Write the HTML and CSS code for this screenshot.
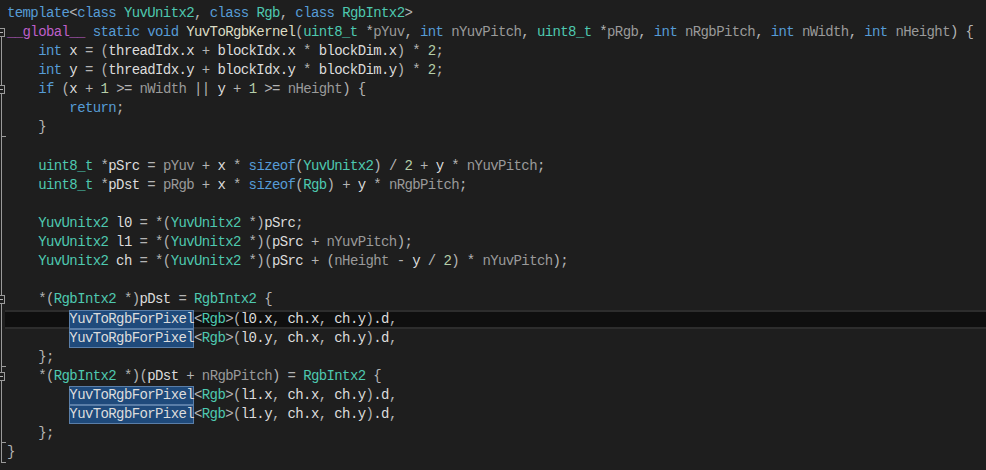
FILE: index.html
```html
<!DOCTYPE html>
<html>
<head>
<meta charset="utf-8">
<link rel="stylesheet" href="styles.css">
</head>
<body>
<div class="editor">
  <div class="ln"><div class="gut"></div><div class="code"><span class="k">template</span><span class="o">&lt;</span><span class="k">class</span> <span class="t">YuvUnitx2</span><span class="o">,</span> <span class="k">class</span> <span class="t">Rgb</span><span class="o">,</span> <span class="k">class</span> <span class="t">RgbIntx2</span><span class="o">&gt;</span></div></div>
  <div class="ln"><div class="gut bar first"><span class="fold"></span></div><div class="code"><span class="g">__global__</span> <span class="k">static</span> <span class="k">void</span> <span class="f">YuvToRgbKernel</span><span class="o">(</span><span class="t">uint8_t</span> <span class="o">*</span><span class="p">pYuv</span><span class="o">,</span> <span class="k">int</span> <span class="p">nYuvPitch</span><span class="o">,</span> <span class="t">uint8_t</span> <span class="o">*</span><span class="p">pRgb</span><span class="o">,</span> <span class="k">int</span> <span class="p">nRgbPitch</span><span class="o">,</span> <span class="k">int</span> <span class="p">nWidth</span><span class="o">,</span> <span class="k">int</span> <span class="p">nHeight</span><span class="o">)</span> <span class="o">{</span></div></div>
  <div class="ln"><div class="gut bar"></div><div class="code">    <span class="k">int</span> x <span class="o">=</span> <span class="o">(</span>threadIdx.x <span class="o">+</span> blockIdx.x <span class="o">*</span> blockDim.x<span class="o">)</span> <span class="o">*</span> <span class="n">2</span><span class="o">;</span></div></div>
  <div class="ln"><div class="gut bar"></div><div class="code">    <span class="k">int</span> y <span class="o">=</span> <span class="o">(</span>threadIdx.y <span class="o">+</span> blockIdx.y <span class="o">*</span> blockDim.y<span class="o">)</span> <span class="o">*</span> <span class="n">2</span><span class="o">;</span></div></div>
  <div class="ln"><div class="gut bar"><span class="fold"></span></div><div class="code">    <span class="k">if</span> <span class="o">(</span>x <span class="o">+</span> <span class="n">1</span> <span class="o">&gt;=</span> <span class="p">nWidth</span> <span class="o">||</span> y <span class="o">+</span> <span class="n">1</span> <span class="o">&gt;=</span> <span class="p">nHeight</span><span class="o">)</span> <span class="o">{</span></div></div>
  <div class="ln"><div class="gut bar"></div><div class="code">        <span class="k">return</span><span class="o">;</span></div></div>
  <div class="ln"><div class="gut bar end"></div><div class="code">    <span class="o">}</span></div></div>
  <div class="ln"><div class="gut bar"></div><div class="code"> </div></div>
  <div class="ln"><div class="gut bar"></div><div class="code">    <span class="t">uint8_t</span> <span class="o">*</span>pSrc <span class="o">=</span> <span class="p">pYuv</span> <span class="o">+</span> x <span class="o">*</span> <span class="k">sizeof</span><span class="o">(</span><span class="t">YuvUnitx2</span><span class="o">)</span> <span class="o">/</span> <span class="n">2</span> <span class="o">+</span> y <span class="o">*</span> <span class="p">nYuvPitch</span><span class="o">;</span></div></div>
  <div class="ln"><div class="gut bar"></div><div class="code">    <span class="t">uint8_t</span> <span class="o">*</span>pDst <span class="o">=</span> <span class="p">pRgb</span> <span class="o">+</span> x <span class="o">*</span> <span class="k">sizeof</span><span class="o">(</span><span class="t">Rgb</span><span class="o">)</span> <span class="o">+</span> y <span class="o">*</span> <span class="p">nRgbPitch</span><span class="o">;</span></div></div>
  <div class="ln"><div class="gut bar"></div><div class="code"> </div></div>
  <div class="ln"><div class="gut bar"></div><div class="code">    <span class="t">YuvUnitx2</span> l0 <span class="o">=</span> <span class="o">*(</span><span class="t">YuvUnitx2</span> <span class="o">*)</span>pSrc<span class="o">;</span></div></div>
  <div class="ln"><div class="gut bar"></div><div class="code">    <span class="t">YuvUnitx2</span> l1 <span class="o">=</span> <span class="o">*(</span><span class="t">YuvUnitx2</span> <span class="o">*)(</span>pSrc <span class="o">+</span> <span class="p">nYuvPitch</span><span class="o">);</span></div></div>
  <div class="ln"><div class="gut bar"></div><div class="code">    <span class="t">YuvUnitx2</span> ch <span class="o">=</span> <span class="o">*(</span><span class="t">YuvUnitx2</span> <span class="o">*)(</span>pSrc <span class="o">+</span> <span class="o">(</span><span class="p">nHeight</span> <span class="o">-</span> y <span class="o">/</span> <span class="n">2</span><span class="o">)</span> <span class="o">*</span> <span class="p">nYuvPitch</span><span class="o">);</span></div></div>
  <div class="ln"><div class="gut bar"></div><div class="code"> </div></div>
  <div class="ln"><div class="gut bar"><span class="fold"></span></div><div class="code">    <span class="o">*(</span><span class="t">RgbIntx2</span> <span class="o">*)</span>pDst <span class="o">=</span> <span class="t">RgbIntx2</span> <span class="o">{</span></div></div>
  <div class="ln"><div class="gut bar"></div><div class="code cur">        <span class="sel">YuvToRgbForPixel</span><span class="o">&lt;</span><span class="t">Rgb</span><span class="o">&gt;(</span>l0.x<span class="o">,</span> ch.x<span class="o">,</span> ch.y<span class="o">)</span>.d<span class="o">,</span></div></div>
  <div class="ln"><div class="gut bar"></div><div class="code">        <span class="sel">YuvToRgbForPixel</span><span class="o">&lt;</span><span class="t">Rgb</span><span class="o">&gt;(</span>l0.y<span class="o">,</span> ch.x<span class="o">,</span> ch.y<span class="o">)</span>.d<span class="o">,</span></div></div>
  <div class="ln"><div class="gut bar end"></div><div class="code">    <span class="o">};</span></div></div>
  <div class="ln"><div class="gut bar"><span class="fold"></span></div><div class="code">    <span class="o">*(</span><span class="t">RgbIntx2</span> <span class="o">*)(</span>pDst <span class="o">+</span> <span class="p">nRgbPitch</span><span class="o">)</span> <span class="o">=</span> <span class="t">RgbIntx2</span> <span class="o">{</span></div></div>
  <div class="ln"><div class="gut bar"></div><div class="code">        <span class="sel">YuvToRgbForPixel</span><span class="o">&lt;</span><span class="t">Rgb</span><span class="o">&gt;(</span>l1.x<span class="o">,</span> ch.x<span class="o">,</span> ch.y<span class="o">)</span>.d<span class="o">,</span></div></div>
  <div class="ln"><div class="gut bar"></div><div class="code">        <span class="sel">YuvToRgbForPixel</span><span class="o">&lt;</span><span class="t">Rgb</span><span class="o">&gt;(</span>l1.y<span class="o">,</span> ch.x<span class="o">,</span> ch.y<span class="o">)</span>.d<span class="o">,</span></div></div>
  <div class="ln"><div class="gut bar end"></div><div class="code">    <span class="o">};</span></div></div>
  <div class="ln"><div class="gut bar end"></div><div class="code"><span class="o">}</span></div></div>
</div>
</body>
</html>
```
FILE: styles.css
```css
html, body {
  margin: 0;
  padding: 0;
  background: #1e1e1e;
}
body {
  width: 986px;
  height: 470px;
  overflow: hidden;
}
.editor {
  padding-top: 3.5px;
  display: flex;
  flex-direction: column;
  font-family: "Liberation Mono", monospace;
  font-size: 14px;
  letter-spacing: -0.61px;
  color: #dcdcdc;
}
.ln {
  display: flex;
  height: 19.13px;
  line-height: 19.13px;
}
.gut {
  width: 7px;
  flex: none;
  position: relative;
}
.code {
  flex: 1;
  white-space: pre;
}
.gut.bar::before {
  content: "";
  position: absolute;
  left: 1px;
  top: 0;
  bottom: 0;
  width: 1px;
  background: #9a9a9a;
}
.gut.first::before {
  top: 10px;
}
.gut.end::after {
  content: "";
  position: absolute;
  left: 1px;
  bottom: 0;
  width: 5px;
  height: 1px;
  background: #9a9a9a;
}
.fold {
  position: absolute;
  left: -4px;
  top: 5px;
  width: 7px;
  height: 7px;
  border: 1px solid #9a9a9a;
  background: #1e1e1e;
  z-index: 1;
}
.fold::after {
  content: "";
  position: absolute;
  left: 2px;
  top: 3px;
  width: 4px;
  height: 1px;
  background: #b4b4b4;
}
.cur {
  margin-left: -2px;
  padding-left: 2px;
  background: #0f0f0f;
  box-shadow: inset 0 2px 0 #2d2d2d, inset 0 -2px 0 #2d2d2d;
}
.sel {
  display: inline-block;
  vertical-align: top;
  height: 19.13px;
  background: #1f4a7b;
  box-shadow: inset 0 0 0 1px #5a7ea8;
  color: #dcdcdc;
}
.k { color: #569cd6; }
.t { color: #4ec9b0; }
.f { color: #dcdcc4; }
.p { color: #9a9a9a; }
.o { color: #b4b4b4; }
.n { color: #b5cea8; }
.g { color: #bd5fc8; }
```
